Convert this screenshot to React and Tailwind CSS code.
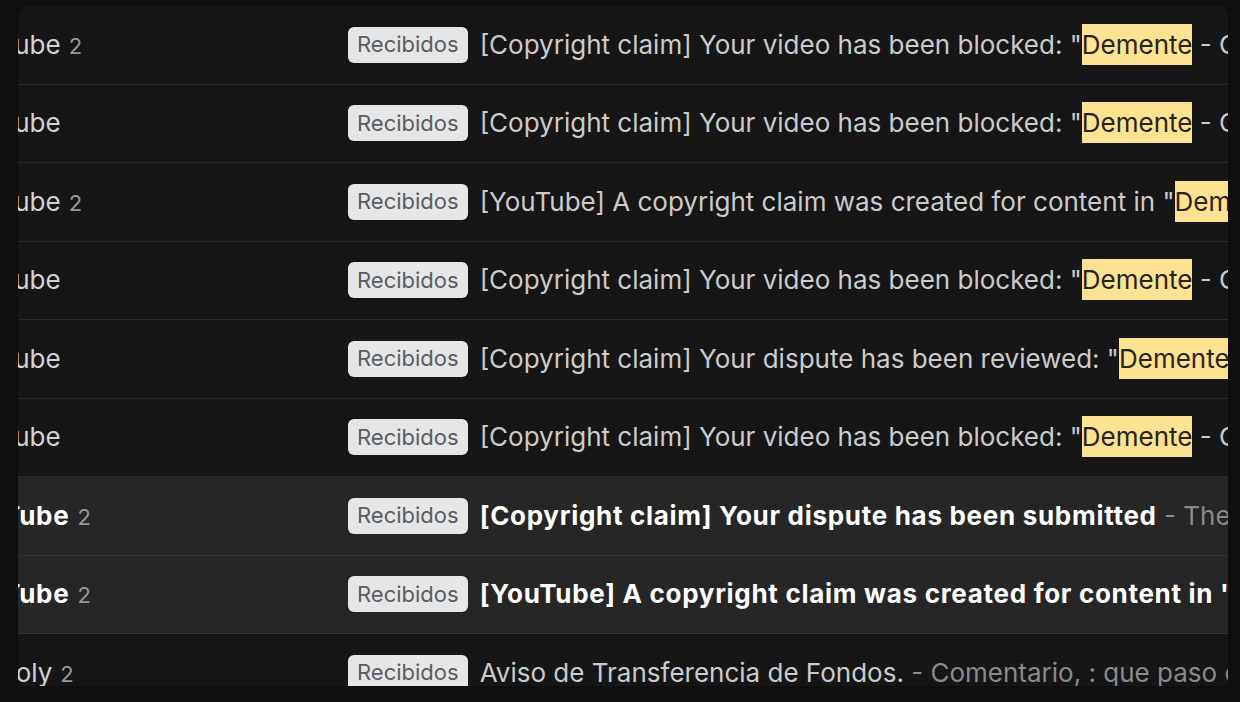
import React from "react";

const rows = [
  { sender: "YouTube", count: 2, subject: '[Copyright claim] Your video has been blocked: "', hit: "Demente", rest: " - Canción" },
  { sender: "YouTube", subject: '[Copyright claim] Your video has been blocked: "', hit: "Demente", rest: " - Canción" },
  { sender: "YouTube", count: 2, subject: '[YouTube] A copyright claim was created for content in "', hit: "Demente", rest: "" },
  { sender: "YouTube", subject: '[Copyright claim] Your video has been blocked: "', hit: "Demente", rest: " - Canción" },
  { sender: "YouTube", subject: '[Copyright claim] Your dispute has been reviewed: "', hit: "Demente", rest: "" },
  { sender: "YouTube", subject: '[Copyright claim] Your video has been blocked: "', hit: "Demente", rest: " - Canción" },
  { sender: "YouTube", count: 2, unread: true, subject: "[Copyright claim] Your dispute has been submitted", snippet: " - The dispute" },
  { sender: "YouTube", count: 2, unread: true, subject: '[YouTube] A copyright claim was created for content in "Demente"' },
  { sender: "Simpoly", count: 2, subject: "Aviso de Transferencia de Fondos.", snippet: " - Comentario, : que paso con" },
];

// ─── Single mail row
const MailRow = ({ row }) => (
  <div
    className={`flex items-center h-[78.5px] shrink-0 border-b ${
      row.unread ? "bg-[#262626] border-[#333333]" : "border-[#2a2a2a]"
    }`}
  >
    <div className="flex items-center -ml-[64px] whitespace-nowrap">
      <div className="w-[394px] shrink-0 text-[26px] leading-none">
        <span className={row.unread ? "font-bold tracking-[0.7px] text-white" : "text-[#d2d2d2]"}>
          {row.sender}
        </span>
        {row.count && <span className="ml-2 text-[22px] text-[#999999]">{row.count}</span>}
      </div>
      <span className="shrink-0 rounded-[6px] bg-[#e6e6e6] px-[9px] h-[36px] flex items-center text-[22px] text-[#5a5e64]">
        Recibidos
      </span>
      <div className="ml-3 text-[26px] leading-none">
        <span className={row.unread ? "font-bold tracking-[0.7px] text-white" : "text-[#cbcbcb]"}>
          {row.subject}
        </span>
        {row.hit && (
          <span className="bg-[#fce291] text-[#2a2418] py-[5px]">{row.hit}</span>
        )}
        {row.rest && <span className="text-[#cbcbcb]">{row.rest}</span>}
        {row.snippet && <span className="text-[#8a8a8a]">{row.snippet}</span>}
      </div>
    </div>
  </div>
);

export default function App() {
  return (
    <div className="w-[1240px] h-[702px] bg-[#0f0f0f] pt-[6px] pl-[18px] font-['Inter',sans-serif]">
      <div className="w-[1210px] h-[680px] overflow-hidden rounded-t-[10px] rounded-b-[6px] bg-[#161616] flex flex-col">
        {rows.map((row, i) => (
          <MailRow key={i} row={row} />
        ))}
      </div>
    </div>
  );
}
